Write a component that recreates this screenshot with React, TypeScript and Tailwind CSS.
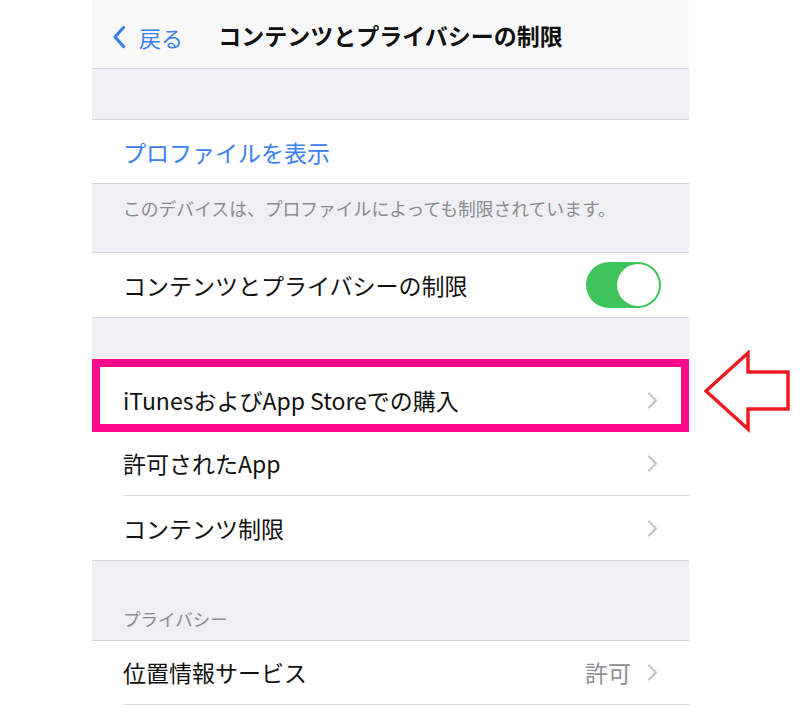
import React from "react";

const font = { fontFamily: '"Noto Sans CJK JP", "Noto Sans", sans-serif' };

function Chevron() {
  return (
    <svg width="11" height="17" viewBox="0 0 11 17" className="shrink-0">
      <polyline points="2,1.5 9,8.5 2,15.5" fill="none" stroke="#c5c5c9" strokeWidth="2.2" strokeLinecap="round" strokeLinejoin="round" />
    </svg>
  );
}

function Row({ label, value, inset = true, last = false }: { label: string; value?: string; inset?: boolean; last?: boolean }) {
  return (
    <div className="bg-white pl-[31px]">
      <div className={`flex items-center h-[64px] pr-[31px] ${last ? "" : "border-b border-[#dcdce0]"}`}>
        <span className="flex-1 text-[23px] text-[#111]">{label}</span>
        {value && <span className="text-[23px] text-[#8e8e93] mr-[16px]">{value}</span>}
        <Chevron />
      </div>
    </div>
  );
}

export default function App() {
  return (
    <div className="relative w-[800px] h-[719px] bg-white overflow-hidden" style={font}>
      <div className="ml-[92px] w-[597px] h-full bg-[#efeff4] flex flex-col">
        {/* nav bar */}
        <div className="relative h-[69px] shrink-0 bg-[#f8f8f8] border-b border-[#d8d8dc] flex items-center justify-center">
          <div className="absolute left-[20px] top-[25px] flex items-center gap-[13px]">
            <svg width="14" height="24" viewBox="0 0 14 24">
              <polyline points="11.5,2.5 3,12 11.5,21.5" fill="none" stroke="#3a80f0" strokeWidth="3.2" strokeLinecap="round" strokeLinejoin="round" />
            </svg>
            <span className="text-[22px] text-[#3a80f0] leading-none">戻る</span>
          </div>
          <span className="text-[23px] font-bold text-[#111] leading-none pt-[2px]">コンテンツとプライバシーの制限</span>
        </div>

        {/* gap */}
        <div className="h-[51px] shrink-0 border-b border-[#d8d8dc]" />

        {/* profile */}
        <div className="h-[64px] shrink-0 bg-white border-b border-[#d8d8dc] flex items-center pl-[31px]">
          <span className="text-[23px] text-[#3a80f0] pt-[2px]">プロファイルを表示</span>
        </div>

        {/* footer note */}
        <div className="h-[69px] shrink-0 border-b border-[#d8d8dc] pl-[31px] pt-[12px]">
          <span className="text-[17.8px] text-[#8a8a8f] leading-[24px]">このデバイスは、プロファイルによっても制限されています。</span>
        </div>

        {/* toggle row */}
        <div className="h-[65px] shrink-0 bg-white border-b border-[#d8d8dc] flex items-center pl-[31px] pr-[28px]">
          <span className="flex-1 text-[23px] text-[#111]">コンテンツとプライバシーの制限</span>
          <div className="w-[75px] h-[46px] rounded-full bg-[#3ec45b] flex items-center justify-end pr-[2px]">
            <div className="w-[42px] h-[42px] rounded-full bg-white" />
          </div>
        </div>

        {/* gap */}
        <div className="h-[41px] shrink-0" />

        {/* highlighted row */}
        <div className="h-[73px] shrink-0 bg-white border-[8px] border-[#ff0a8c] flex items-center pl-[23px] pr-[23px] pt-[9px]">
          <span className="flex-1 text-[23px] text-[#111]">iTunesおよびApp Storeでの購入</span>
          <Chevron />
        </div>

        <Row label="許可されたApp" />
        <div className="bg-white border-b border-[#d8d8dc]">
          <Row label="コンテンツ制限" last />
        </div>

        {/* privacy header */}
        <div className="h-[80px] shrink-0 border-b border-[#d8d8dc] flex items-end pl-[31px] pb-[8px]">
          <span className="text-[17.5px] text-[#8a8a8f]">プライバシー</span>
        </div>

        <Row label="位置情報サービス" value="許可" />
        <div className="flex-1 bg-white" />
      </div>

      {/* red arrow */}
      <svg className="absolute left-[704px] top-[350px]" width="88" height="84" viewBox="0 0 88 84">
        <polygon points="2,41 44,3 44,22 84,22 84,59 44,59 44,79" fill="white" stroke="#ed1c24" strokeWidth="3.5" strokeLinejoin="miter" />
      </svg>
    </div>
  );
}
